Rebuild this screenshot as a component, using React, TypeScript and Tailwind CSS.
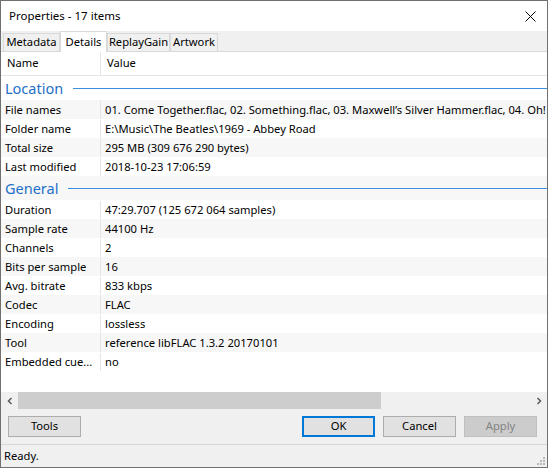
import React from "react";

type Row =
  | { kind: "group"; label: string }
  | { kind: "item"; name: string; value: string };

const rows: Row[] = [
  { kind: "group", label: "Location" },
  {
    kind: "item",
    name: "File names",
    value:
      "01. Come Together.flac, 02. Something.flac, 03. Maxwell\u2019s Silver Hammer.flac, 04. Oh! Darling.flac, 05. Octopus\u2019s Garden.flac",
  },
  { kind: "item", name: "Folder name", value: "E:\\Music\\The Beatles\\1969 - Abbey Road" },
  { kind: "item", name: "Total size", value: "295 MB (309 676 290 bytes)" },
  { kind: "item", name: "Last modified", value: "2018-10-23 17:06:59" },
  { kind: "group", label: "General" },
  { kind: "item", name: "Duration", value: "47:29.707 (125 672 064 samples)" },
  { kind: "item", name: "Sample rate", value: "44100 Hz" },
  { kind: "item", name: "Channels", value: "2" },
  { kind: "item", name: "Bits per sample", value: "16" },
  { kind: "item", name: "Avg. bitrate", value: "833 kbps" },
  { kind: "item", name: "Codec", value: "FLAC" },
  { kind: "item", name: "Encoding", value: "lossless" },
  { kind: "item", name: "Tool", value: "reference libFLAC 1.3.2 20170101" },
  { kind: "item", name: "Embedded cue...", value: "no" },
];

const tabs = [
  { label: "Metadata", w: "w-[57px]" },
  { label: "Details", w: "w-[47px]" },
  { label: "ReplayGain", w: "w-[63px]" },
  { label: "Artwork", w: "w-[48px]" },
];

function Button({ label, primary, disabled }: { label: string; primary?: boolean; disabled?: boolean }) {
  let cls = "border-[#adadad] bg-[#e1e1e1] text-black";
  if (primary) cls = "border-2 border-[#0078d7] bg-[#e1e1e1] text-black";
  if (disabled) cls = "border-[#bfbfbf] bg-[#cccccc] text-[#838383]";
  return (
    <div className={`flex h-[21px] w-[73px] items-center justify-center border ${cls}`}>
      {label}
    </div>
  );
}

export default function App() {
  return (
    <div
      className="flex h-[468px] w-[548px] flex-col overflow-hidden border border-[#707070] bg-[#f0f0f0] text-[11.2px] text-black"
      style={{ fontFamily: '"Noto Sans", "Liberation Sans", sans-serif' }}
    >
      {/* title bar */}
      <div className="flex h-[30px] shrink-0 items-center justify-between bg-white pl-[8px] pr-[10px]">
        <span className="text-[11.5px]">Properties - 17 items</span>
        <svg width="11" height="11" viewBox="0 0 11 11" className="mr-[1px]">
          <path d="M0.5 0.5L10.5 10.5M10.5 0.5L0.5 10.5" stroke="#000" strokeWidth="1" />
        </svg>
      </div>

      {/* tabs */}
      <div className="flex h-[20px] shrink-0 items-end pl-[2px]">
        {tabs.map((t) =>
          t.label === "Details" ? (
            <div
              key={t.label}
              className={`-mb-px z-10 flex h-[21px] items-center justify-center border border-b-0 border-[#d9d9d9] bg-white ${t.w}`}
            >
              {t.label}
            </div>
          ) : (
            <div
              key={t.label}
              className={`flex h-[18px] items-center justify-center border border-b-0 border-[#d9d9d9] bg-[#f0f0f0] ${t.w}`}
            >
              {t.label}
            </div>
          )
        )}
      </div>

      {/* list */}
      <div className="flex min-h-0 flex-1 flex-col border-t border-[#d9d9d9] bg-white">
        <div className="flex h-[24px] shrink-0 border-b border-[#e5e5e5]">
          <div className="flex w-[100px] items-center border-r border-[#e5e5e5] pl-[6px]">Name</div>
          <div className="flex items-center pl-[6px]">Value</div>
        </div>
        <div className="flex-1 overflow-hidden">
          {rows.map((r, i) => {
            const bg = i % 2 === 1 ? "bg-[#f7f7f7]" : "bg-white";
            if (r.kind === "group") {
              return (
                <div key={i} className={`flex h-[24px] items-center gap-[10px] pl-[4px] ${bg}`}>
                  <span className="text-[14.5px] leading-none text-[#1e6fc7]">{r.label}</span>
                  <div className="h-px flex-1 bg-[#3c8ee0]" />
                </div>
              );
            }
            return (
              <div key={i} className={`flex h-[19px] items-center pt-px ${bg}`}>
                <div className="flex h-full w-[100px] shrink-0 items-center whitespace-nowrap border-r border-[#e5e5e5] pl-[4px]">
                  {r.name}
                </div>
                <div className="whitespace-nowrap pl-[4px]">{r.value}</div>
              </div>
            );
          })}
        </div>
        {/* horizontal scrollbar */}
        <div className="flex h-[17px] shrink-0 items-center bg-[#f0f0f0]">
          <div className="flex w-[17px] items-center justify-center">
            <svg width="8" height="8" viewBox="0 0 8 8">
              <path d="M5.5 1L2.5 4L5.5 7" stroke="#606060" strokeWidth="1.6" fill="none" />
            </svg>
          </div>
          <div className="h-full w-[363px] bg-[#cdcdcd]" />
          <div className="flex-1" />
          <div className="flex w-[17px] items-center justify-center">
            <svg width="8" height="8" viewBox="0 0 8 8">
              <path d="M2.5 1L5.5 4L2.5 7" stroke="#606060" strokeWidth="1.6" fill="none" />
            </svg>
          </div>
        </div>
      </div>

      {/* buttons */}
      <div className="flex h-[35px] shrink-0 items-center pl-[7px] pr-[10px]">
        <Button label="Tools" />
        <div className="flex-1" />
        <div className="flex gap-[8px]">
          <Button label="OK" primary />
          <Button label="Cancel" />
          <Button label="Apply" disabled />
        </div>
      </div>

      {/* status bar */}
      <div className="relative flex h-[23px] shrink-0 items-center border-t border-[#d7d7d7] pl-[3px]">
        Ready.
        <svg width="10" height="10" viewBox="0 0 10 10" className="absolute bottom-[1px] right-[1px]">
          {[
            [7, 1],
            [4, 4],
            [7, 4],
            [1, 7],
            [4, 7],
            [7, 7],
          ].map(([x, y], k) => (
            <rect key={k} x={x} y={y} width="2" height="2" fill="#b8b8b8" />
          ))}
        </svg>
      </div>
    </div>
  );
}
